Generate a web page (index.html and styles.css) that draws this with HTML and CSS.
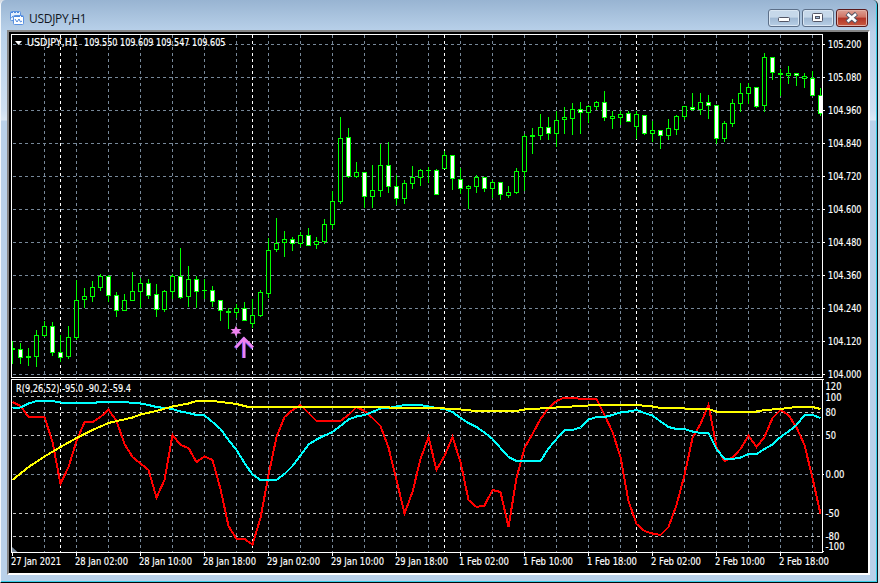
FILE: index.html
```html
<!DOCTYPE html>
<html lang="en">
<head>
<meta charset="utf-8">
<title>USDJPY,H1</title>
<link rel="stylesheet" href="styles.css">
</head>
<body>
<div class="window">
  <header class="titlebar">
    <svg class="app-icon" width="16" height="16" viewBox="0 0 16 16">
      <rect x="1.5" y="1.5" width="10" height="9" rx="1" fill="#e4effd" stroke="#5b92e0"/>
      <path d="M2 2.500h9" stroke="#4b86dc" stroke-dasharray="2 1"/>
      <path d="M2.500 8l1.500-2" fill="none" stroke="#4b86dc"/>
      <rect x="4.500" y="5.500" width="10" height="9" rx="1" fill="#fff" stroke="#5b92e0"/>
      <path d="M5 6.500h9" stroke="#4b86dc" stroke-dasharray="6 1"/>
      <path d="M6 9l2 3 2-3 1.500 3 1.500-1" fill="none" stroke="#4b86dc"/>
    </svg>
    <span class="title">USDJPY,H1</span>
    <div class="controls">
      <button class="control" aria-label="Minimize"><svg width="30" height="16"><rect x="9.500" y="7.500" width="11" height="4" rx="1" fill="#fff" stroke="#535666"/></svg></button>
      <button class="control" aria-label="Maximize"><svg width="30" height="16"><rect x="9.500" y="3.500" width="10" height="8" rx="1" fill="#fff" stroke="#535666"/><rect x="12.500" y="6.500" width="4" height="2" fill="#9db8d4" stroke="#535666"/></svg></button>
      <button class="control close" aria-label="Close"><svg width="30" height="16"><path d="M10 3.500l9.500 8.500M19.500 3.500l-9.500 8.500" stroke="#535666" stroke-width="4.500"/><path d="M10.500 4l8.500 7.500M19 4l-8.500 7.500" stroke="#fff" stroke-width="2.600"/></svg></button>
    </div>
  </header>
  <main class="client">
    <svg id="chart" class="chart" width="859" height="541" viewBox="9 32 859 541"></svg>
  </main>
</div>
<script src="script.js"></script>
</body>
</html>
```
FILE: styles.css
```css
* { box-sizing: border-box; }
body { margin: 0; background: #d5dbe3; overflow: hidden; }
.window {
  width: 878px;
  height: 583px;
  padding: 0 6px 7px 6px;
  border-left: 1px solid #f4f8fc;
  border-right: 1px solid #101820;
  border-bottom: 1px solid #05080a;
  border-radius: 5px 5px 0 0;
  box-shadow: inset -1px -1px 0 #38cfe8;
  background: linear-gradient(#98b4d2 0, #a9c3de 16px, #b9d1ea 32px, #cfe0f2 110px, #dce9f6 120px, #b9d1ea 121px);
}
.titlebar { height: 30px; display: flex; align-items: flex-start; }
.app-icon { margin: 10px 0 0 2px; }
.title {
  margin: 10px 0 0 4px;
  font: 12px/18px "Open Sans", sans-serif;
  letter-spacing: -0.3px;
  color: #10151c;
}
.controls { margin: 9px 3px 0 auto; display: flex; gap: 2px; }
.control {
  width: 32px;
  height: 18px;
  padding: 0;
  border: 1px solid #5c6f88;
  border-radius: 3px;
  background: linear-gradient(#c6d8ea 0 45%, #9fb8d3 50%, #b8cfe6);
  box-shadow: inset 0 0 0 1px #d9e6f3;
}
.control svg { display: block; }
.close {
  border-color: #5a1a1c;
  background: linear-gradient(#dda094 0, #cf7364 45%, #b23326 50%, #c95a40);
  box-shadow: inset 0 0 0 1px #e3b0a6;
}
.client {
  width: 863px;
  height: 545px;
  border: 2px solid #fff;
  border-top-color: #858585;
  border-left-color: #858585;
  background: #000;
}
.chart { display: block; background: #000; }
.label {
  font-family: "DejaVu Sans Condensed", "DejaVu Sans", sans-serif;
  font-size: 9.8px;
  fill: #fff;
  stroke: #fff;
  stroke-width: 0.15px;
}
.grid { stroke: #778899; stroke-dasharray: 3 3; }
.level { stroke: #c0c0c0; stroke-dasharray: 3 3; }
.day { stroke: #fff; stroke-dasharray: 3 3; }
.frame { fill: none; stroke: #fff; }
.candle-line { fill: #0f0; }
.candle-fill { fill: #fff; }
.candle-hollow { fill: #000; }
.series { fill: none; stroke-width: 2; }
.red { stroke: #f00; }
.cyan { stroke: #0ff; }
.yellow { stroke: #ff0; }
```
FILE: script.js
```js
const NS = "http://www.w3.org/2000/svg";
const chart = document.getElementById("chart");

function add(tag, attrs, text) {
  const el = document.createElementNS(NS, tag);
  for (const key in attrs) el.setAttribute(key, attrs[key]);
  if (text) el.textContent = text;
  chart.appendChild(el);
}
function hline(y, cls) {
  add("path", { d: `M13 ${y + 0.5}H822`, class: cls, "shape-rendering": "crispEdges" });
}
function vline(x, cls) {
  add("path", { d: `M${x + 0.5} 35V552`, class: cls, "shape-rendering": "crispEdges" });
}
function rect(x, y, w, h, cls) {
  add("rect", { x, y, width: w, height: h, class: cls, "shape-rendering": "crispEdges" });
}
function label(x, y, text, width) {
  add("text", { x, y, class: "label", textLength: width, lengthAdjust: "spacingAndGlyphs" }, text);
}

// Grid
for (let y = 44; y <= 374; y += 33) hline(y, "grid");
for (let x = 44; x <= 812; x += 32) vline(x, "grid");
[396, 412, 435, 513, 536].forEach(y => hline(y, "level"));
hline(474, "grid");
[60, 252, 444, 636].forEach(x => vline(x, "day"));

// Candles: wick top, wick bottom, body top, body bottom, filled
const candles = [
[341,364,348,350,0],[343,364,349,358,1],[348,366,356,358,0],[330,367,335,357,0],[321,337,326,336,0],
[322,356,326,353,1],[335,362,352,358,1],[326,359,337,357,0],[280,340,300,338,0],[288,308,296,300,0],
[281,302,287,297,0],[274,291,276,288,0],[275,302,276,296,1],[292,317,295,311,1],[294,311,300,311,0],
[272,301,291,301,0],[278,308,283,292,0],[279,299,283,296,1],[284,317,294,310,1],[290,312,291,310,0],
[274,299,276,292,0],[248,299,276,298,1],[266,307,279,297,0],[276,308,279,292,1],[279,299,290,291,0],
[286,307,290,302,1],[300,321,300,311,1],[308,329,311,313,0],[304,318,308,313,0],[302,321,308,321,1],
[299,328,315,324,0],[290,317,292,316,0],[238,298,250,294,0],[218,252,243,250,0],[231,257,239,243,0],
[237,251,239,244,1],[232,247,235,244,0],[228,246,235,246,1],[237,249,241,245,0],[219,244,224,242,0],
[191,229,201,225,0],[117,204,138,202,0],[128,178,137,177,1],[162,178,172,177,0],[172,208,172,197,1],
[165,208,190,197,0],[144,197,165,191,0],[142,193,165,187,1],[175,205,186,199,1],[180,204,183,199,0],
[166,189,177,184,0],[169,186,170,178,0],[167,183,170,171,0],[169,195,170,195,1],[151,169,155,169,0],
[155,190,155,179,1],[168,194,179,189,1],[185,209,186,189,0],[175,193,177,187,0],[177,192,177,189,1],
[180,198,182,189,0],[182,200,182,195,1],[186,198,192,196,0],[168,194,171,193,0],[134,191,136,172,0],
[128,154,135,137,0],[114,140,127,136,0],[117,140,127,134,1],[111,147,120,134,0],[107,134,117,120,0],
[103,135,109,119,0],[102,134,109,113,1],[105,123,106,113,0],[101,110,102,107,0],[91,121,102,118,1],
[111,129,116,119,0],[111,125,114,118,0],[111,122,113,122,1],[111,139,114,127,0],[115,135,115,134,1],
[121,142,130,134,0],[130,149,130,136,1],[119,140,128,136,0],[115,135,116,130,0],[106,120,106,117,0],
[93,111,107,110,1],[93,115,102,110,0],[95,119,102,106,1],[105,144,105,139,1],[121,142,123,139,0],
[99,127,103,124,0],[83,112,93,104,0],[83,104,87,94,0],[87,108,87,107,1],[53,112,57,106,0],
[57,80,57,73,1],[69,96,73,75,0],[66,84,73,76,0],[73,86,73,76,1],[73,88,76,79,0],
[71,96,78,96,1],[88,116,95,114,1]];

candles.forEach(([top, bottom, bodyTop, bodyBottom, filled], i) => {
  const x = 12 + 8 * i;
  const left = i === 0 ? x : x - 2;
  const width = i === 0 ? 3 : i === candles.length - 1 ? 4 : 5;
  rect(x, top, 1, bottom - top, "candle-line");
  rect(left, bodyTop, width, bodyBottom - bodyTop, "candle-line");
  if (bodyBottom - bodyTop > 2) {
    rect(x - 1, bodyTop + 1, 3, bodyBottom - bodyTop - 2, filled ? "candle-fill" : "candle-hollow");
  }
});

// Oscillator lines
const red = "12,402 20,406 28,417 36,417 44,417 52,442 60,484 68,467 76,441 84,422 92,422 100,417 108,409.5 116,421 124,444 132,457 140,463.5 148,470 156,497.5 164,480 172,435 180,445 188,448 196,462 204,456.5 212,460 220,489 228,526 236,539 244,539 252,544.5 260,518 268,475 276,437 284,417 292,410 300,405 308,413 316,421 324,421 332,421 340,421 348,415 356,407 364,411 372,418 380,426 388,447.5 396,480 404,513.5 412,492 420,459 428,437 436,470 444,456 452,437 460,462 468,500 476,507 484,505.5 492,490 500,492 508,527 516,478 524,448 532,434 540,419 548,408 556,401 564,397.5 572,397.5 580,399 588,399 596,399 604,415 612,432 620,457 628,501 636,524 644,531 652,533.5 660,535 668,527 676,505 684,475 692,438 700,424 708,405 716,447 724,461 732,457.5 740,449 748,435.5 756,447 764,437 772,418 780,410 788,415 796,427.5 804,445 812,478 820,514";
const cyan = "12,408 20,407.5 28,403.5 36,401 52,401 60,402.5 92,403 100,402 124,402 132,403 140,403.5 148,405 156,407 164,408 172,409 180,411.5 188,413 196,415 204,415.5 212,422 220,429 228,440 236,450 244,463 252,474.5 260,480 276,480 284,474 292,466 300,455.5 308,444.5 316,439.5 324,435.5 332,432 340,426 348,419.5 356,416.5 364,415 372,412 380,408.5 388,408 396,406.5 404,405 420,405 428,406.5 436,408 444,409 452,412 460,418 468,423 476,427 484,432.5 492,439 500,448 508,457 516,461 540,461 548,448.5 556,439 564,430.5 572,430 580,427.5 588,419.5 596,417 604,417 612,415 620,412.5 628,411.5 636,410 644,413 652,415.5 660,421.5 668,427 676,429 684,429 692,431.5 700,433 708,433 716,449 724,459 732,459 740,457.5 748,454 756,454 764,449 772,444.5 780,437 788,431.5 796,425 804,415 812,415 820,418";
const yellow = "12,480 28,467 44,456.5 60,447 76,438 92,430 108,423 132,417.5 140,414.5 156,411 172,406.5 188,403.5 196,401 212,401 236,404 248,407 388,407 390,408 444,408.5 460,409.5 476,411 516,411 524,409.5 548,408 564,407 588,405.5 636,405 652,406.5 660,408 684,408.5 708,409 716,411.5 756,411.5 764,410 780,409 788,408 796,407 812,407 820,409";
[["red", red], ["cyan", cyan], ["yellow", yellow]].forEach(([name, points]) =>
  add("polyline", { points, class: "series " + name, transform: "translate(0.5 0)", "shape-rendering": "crispEdges" }));

// Buy signal
add("path", { d: "M243.500 358V338M235 348L243.500 339L252.500 348", fill: "none", stroke: "#6a50f0", "stroke-width": 3.2 });
add("path", { d: "M244.200 358V338M235.700 347.500L244 338.500L253 347.500", fill: "none", stroke: "#ee82ee", "stroke-width": 2.600 });
add("path", { d: "M236 325.500L237.500 329H241.500L239 331.200L241.500 333.500H237.500L236 337L234.500 333.500H230.500L233 331.200L230.500 329H234.500Z", fill: "#ee82ee" });

// Panel frames, ticks and corner markers
add("path", { d: "M11.500 34.500H822.500V377.500H11.500ZM11.500 379.500H822.500V552.500H11.500Z", class: "frame", "shape-rendering": "crispEdges" });
add("path", { d: "M12 547L17.500 552H12Z", fill: "#778899" });
add("path", { d: "M15 41H22L18.500 45Z", fill: "#fff" });

label(27, 46, "USDJPY,H1", 51);
label(84, 46, "109.550 109.609 109.547 109.605", 141.5);
label(16, 392, "R(9,26,52) -95.0 -90.2 -59.4", 115);

for (let i = 0; i <= 10; i++) {
  const y = 44 + 33 * i;
  rect(823, y, 2, 1, "candle-fill");
  label(828, y + 4, (105.2 - 0.12 * i).toFixed(3), 33.5);
}
[[390, "120", 16], [400.5, "100", 16], [416, "80", 10.500], [439, "50", 10.500], [478, "0.00", 19],
 [517, "-50", 14], [540, "-80", 14], [549.5, "-100", 19]].forEach(([y, text, w]) => label(825.5, y, text, w));
rect(823, 379, 1, 1, "candle-fill");
rect(823, 474, 1, 1, "candle-fill");
rect(823, 551, 1, 1, "candle-fill");

["27 Jan 2021", "28 Jan 02:00", "28 Jan 10:00", "28 Jan 18:00", "29 Jan 02:00", "29 Jan 10:00", "29 Jan 18:00",
 "1 Feb 02:00", "1 Feb 10:00", "1 Feb 18:00", "2 Feb 02:00", "2 Feb 10:00", "2 Feb 18:00"].forEach((text, i) => {
  const x = 12 + 64 * i;
  rect(x, 553, 1, 3, "candle-fill");
  label(x - 1, 565, text, i === 0 ? 50 : i < 7 ? 53 : 50);
});
```
